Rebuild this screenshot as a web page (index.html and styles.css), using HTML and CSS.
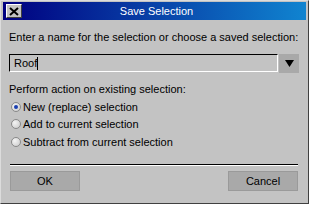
FILE: index.html
```html
<!DOCTYPE html>
<html>
<head>
<meta charset="utf-8">
<link rel="stylesheet" href="styles.css">
</head>
<body>
<div class="window">
  <div class="titlebar">
    <div class="close"><svg width="10" height="9" viewBox="0 0 10 9"><path d="M1 1 L9 8 M9 1 L1 8" stroke="#000" stroke-width="2" fill="none"/></svg></div>
    <div class="title">Save Selection</div>
  </div>
  <div class="content">
    <div class="label">Enter a name for the selection or choose a saved selection:</div>
    <div class="combo">
      <div class="input"><span class="val">Roof</span><span class="caret"></span></div>
      <div class="drop"><svg width="9" height="7" viewBox="0 0 9 7"><path d="M0 0 H9 L4.5 7 Z" fill="#000"/></svg></div>
    </div>
    <div class="label2">Perform action on existing selection:</div>
    <div class="radios">
      <div class="radio"><span class="dot on"></span>New (replace) selection</div>
      <div class="radio"><span class="dot"></span>Add to current selection</div>
      <div class="radio"><span class="dot"></span>Subtract from current selection</div>
    </div>
    <div class="sep"></div>
    <div class="buttons">
      <div class="btn">OK</div>
      <div class="btn">Cancel</div>
    </div>
  </div>
</div>
</body>
</html>
```
FILE: styles.css
```css
html, body { margin: 0; padding: 0; background: #c3c3c3; }
body { font-family: "Liberation Sans", Arial, sans-serif; font-size: 11px; color: #000; }
.window {
  width: 309px; height: 204px; box-sizing: border-box;
  background: #c3c3c3;
  border-top: 1px solid #dcdcdc; border-left: 1px solid #dcdcdc;
  border-right: 1px solid #404040; border-bottom: 1px solid #404040;
  padding: 1px 2px 1px 1px;
  display: flex; flex-direction: column;
}
.titlebar {
  height: 18px; position: relative;
  background: linear-gradient(to right, #000080, #1084d0);
  display: flex; align-items: center; margin-left: 1px;
}
.close {
  width: 16px; height: 14px; box-sizing: border-box; margin-left: 3px;
  background: #c3c3c3;
  border-top: 1px solid #fff; border-left: 1px solid #fff;
  border-right: 1px solid #404040; border-bottom: 1px solid #404040;
  display: flex; align-items: center; justify-content: center;
}
.title {
  position: absolute; left: 0; right: 0; top: 0; line-height: 18px;
  text-align: center; color: #fff; font-size: 11px; padding-left: 4px;
}
.content { padding: 0 7px 0 7px; flex: 1; display: flex; flex-direction: column; white-space: nowrap; }
.label { margin-top: 10px; line-height: 14px; }
.combo { display: flex; margin-top: 10px; height: 19px; }
.input {
  flex: 1; box-sizing: border-box; height: 18px;
  border-top: 1px solid #000; border-left: 1px solid #000;
  border-right: 1px solid #fff; border-bottom: 1px solid #fff;
  display: flex; align-items: center; padding-left: 4px;
}
.caret { width: 1px; height: 13px; background: #000; margin-left: 0; }
.drop {
  width: 20px; height: 19px; background: #a9a9a9;
  display: flex; align-items: center; justify-content: center; margin-left: 1px;
}
.label2 { margin-top: 9px; line-height: 14px; }
.radios { margin-top: 2px; }
.radio { display: flex; align-items: center; height: 17.5px; }
.dot {
  width: 10px; height: 10px; border-radius: 50%; box-sizing: border-box;
  border: 1px solid #8a8a8a; background: radial-gradient(circle at 35% 35%, #f4f4f4, #c8c8c8);
  margin: 0 2px 0 2px; position: relative;
}
.dot.on::after {
  content: ""; position: absolute; left: 2px; top: 2px; width: 4px; height: 4px;
  border-radius: 50%; background: #1a3fb0;
}
.sep { margin-top: 13px; height: 1px; background: #000; border-bottom: 1px solid #fff; margin-left: 1px; margin-right: 1px; }
.buttons { display: flex; justify-content: space-between; margin-top: 5px; padding: 0 1px; }
.btn {
  width: 70px; height: 20px; box-sizing: border-box;
  background: #a9a9a9; border: 1px solid #9a9a9a;
  display: flex; align-items: center; justify-content: center;
}
```
